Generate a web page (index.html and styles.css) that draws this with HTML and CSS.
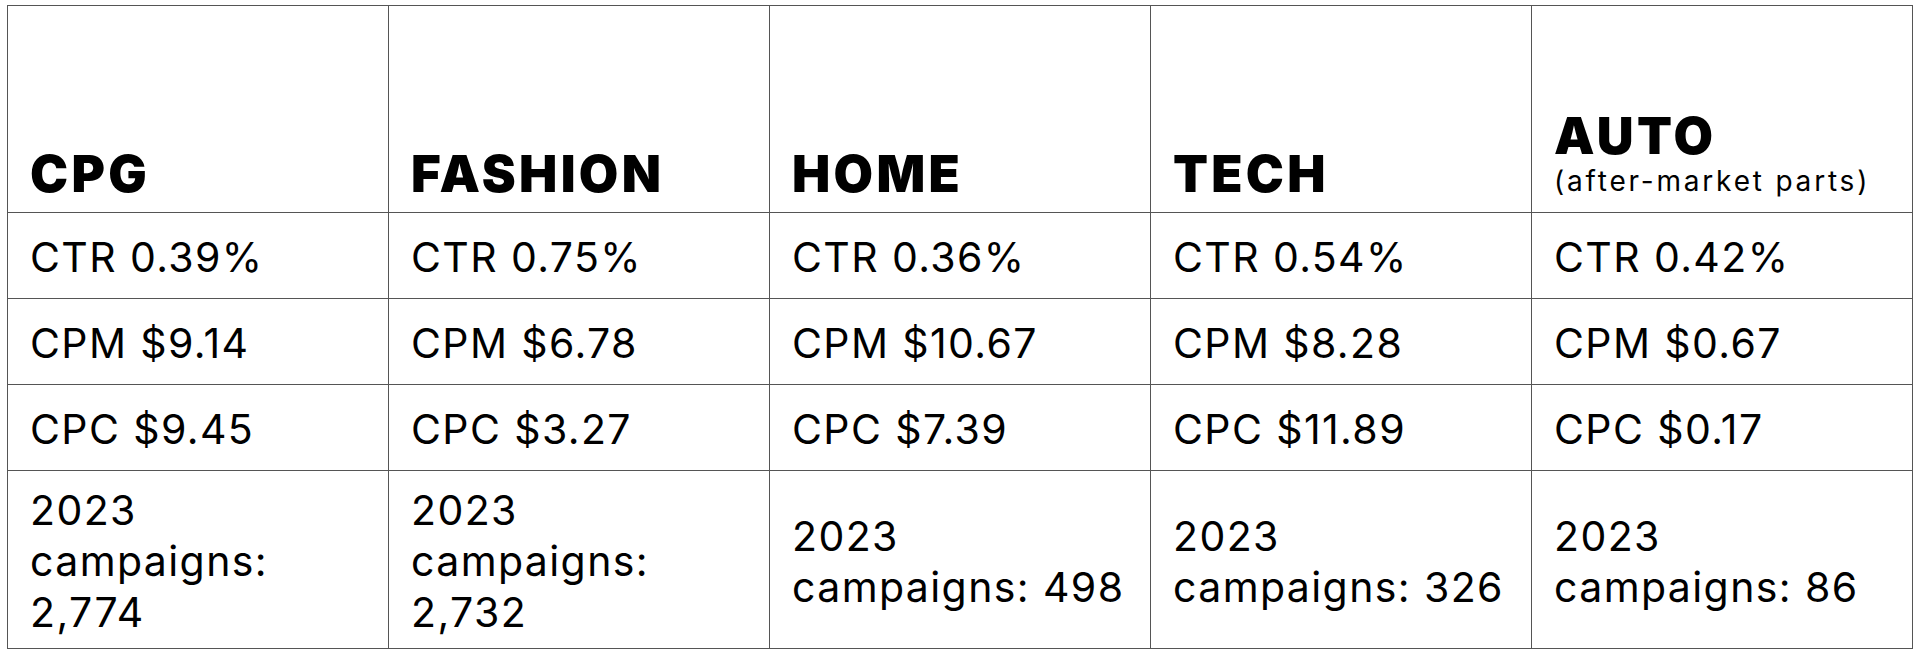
FILE: index.html
```html
<!DOCTYPE html>
<html lang="en">
<head>
<meta charset="utf-8">
<title>Benchmarks by vertical</title>
<link rel="stylesheet" href="styles.css">
</head>
<body>
<div class="wrap">
<table class="bench">
  <colgroup><col><col><col><col><col></colgroup>
  <thead>
    <tr class="head-row">
      <th><span class="title">CPG</span></th>
      <th><span class="title">FASHION</span></th>
      <th><span class="title">HOME</span></th>
      <th><span class="title">TECH</span></th>
      <th><span class="title">AUTO</span><span class="sub">(after-market parts)</span></th>
    </tr>
  </thead>
  <tbody>
    <tr class="metric-row">
      <td>CTR 0.39%</td><td>CTR 0.75%</td><td>CTR 0.36%</td><td>CTR 0.54%</td><td>CTR 0.42%</td>
    </tr>
    <tr class="metric-row">
      <td>CPM $9.14</td><td>CPM $6.78</td><td>CPM $10.67</td><td>CPM $8.28</td><td>CPM $0.67</td>
    </tr>
    <tr class="metric-row">
      <td>CPC $9.45</td><td>CPC $3.27</td><td>CPC $7.39</td><td>CPC $11.89</td><td>CPC $0.17</td>
    </tr>
    <tr class="count-row">
      <td>2023 campaigns: 2,774</td><td>2023 campaigns: 2,732</td><td>2023 campaigns: 498</td><td>2023 campaigns: 326</td><td>2023 campaigns: 86</td>
    </tr>
  </tbody>
</table>
</div>
</body>
</html>
```
FILE: styles.css
```css
html, body {
  margin: 0;
  padding: 0;
  background: #ffffff;
}
.wrap {
  padding: 5px 0 0 7px;
}
.bench {
  border-collapse: collapse;
  width: 1906px;
  table-layout: fixed;
  color: #000;
  font-family: Inter, "Liberation Sans", sans-serif;
}
.bench th, .bench td {
  border: 1px solid #555;
  text-align: left;
  padding: 0 18px 0 22px;
}
.head-row {
  height: 207px;
}
.head-row th {
  vertical-align: bottom;
  padding-bottom: 13px;
}
.title {
  display: block;
  font-size: 51px;
  line-height: 51px;
  font-weight: 900;
  letter-spacing: 3.3px;
}
.sub {
  display: block;
  font-size: 28px;
  line-height: 28px;
  font-weight: 400;
  margin-top: 6px;
  margin-bottom: 4px;
  letter-spacing: 2.8px;
}
.metric-row {
  height: 86px;
}
.metric-row td, .count-row td {
  font-size: 41px;
  line-height: 51px;
  font-weight: 400;
  vertical-align: middle;
  letter-spacing: 1.4px;
  padding-top: 4px;
}
.count-row {
  height: 178px;
}
```
